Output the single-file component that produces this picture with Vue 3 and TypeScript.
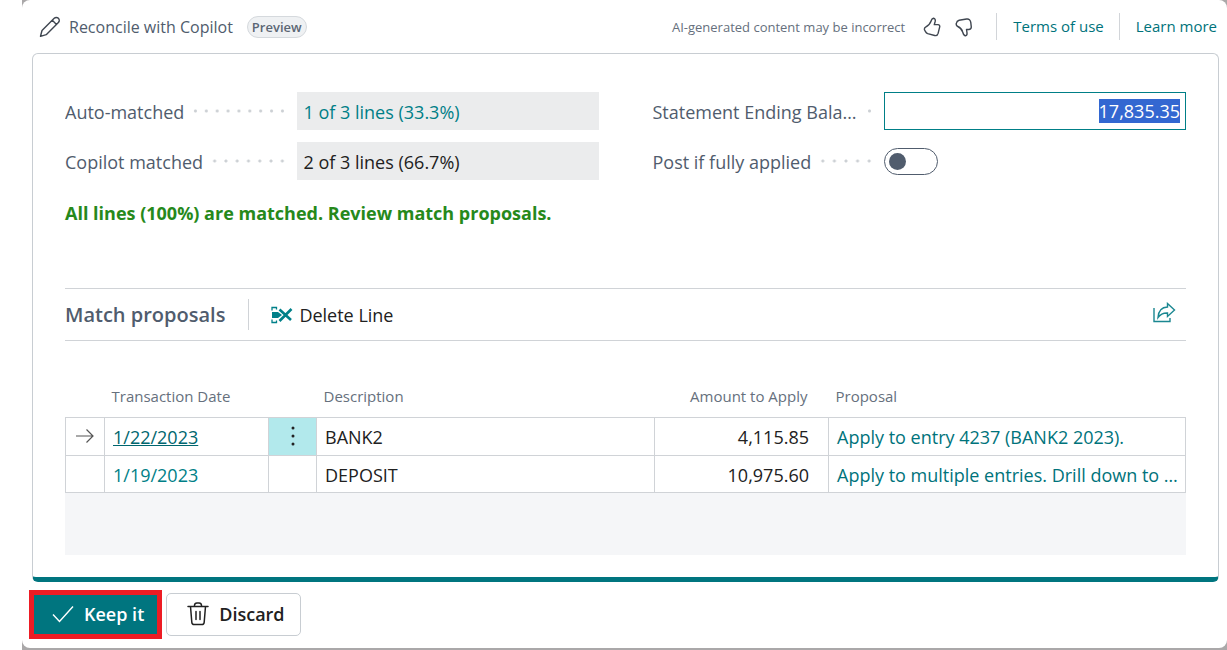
<script setup lang="ts">
import { onMounted, ref } from 'vue'

interface Proposal {
  date: string
  description: string
  amount: string
  proposal: string
}

const proposals: Proposal[] = [
  { date: '1/22/2023', description: 'BANK2', amount: '4,115.85', proposal: 'Apply to entry 4237 (BANK2 2023).' },
  { date: '1/19/2023', description: 'DEPOSIT', amount: '10,975.60', proposal: 'Apply to multiple entries. Drill down to see them.' },
]

const selected = ref(0)
const balance = ref('17,835.35')
const postIfApplied = ref(false)
const balanceInput = ref<HTMLInputElement | null>(null)

onMounted(() => {
  balanceInput.value?.focus()
  balanceInput.value?.select()
})
</script>

<template>
  <div class="backdrop">
    <main class="dialog">
      <header class="top">
        <svg class="pencil" width="22" height="22" viewBox="0 0 22 22" fill="none" stroke="#3f4650" stroke-width="1.4" stroke-linejoin="round" stroke-linecap="round">
          <path d="M1.5 20.3 3 14.5 15.2 2.3a2.9 2.9 0 0 1 4.2 4.2L7.2 18.7ZM13.3 4.2l4.2 4.2" />
        </svg>
        <h1>Reconcile with Copilot</h1>
        <span class="badge">Preview</span>
        <span class="notice">AI-generated content may be incorrect</span>
        <button class="icon-button" type="button" aria-label="Like">
          <svg width="18" height="20" viewBox="0 0 18 20" fill="none" stroke="#3f4650" stroke-width="1.4" stroke-linejoin="round">
            <path d="M10.5 1.2c1.5.3 2 1.6 1.7 3L11.3 7.6h3.7c1.3.1 2 1 1.7 2.300l-1.600 6.500c-.5 1.700-1.700 2.600-3.400 2.100l-7-1.900C3.500 16.200 3 15.600 2.500 14.700L1.600 13c-.4-1.300-.1-2.300 1-2.800 3-1.400 4.600-3.500 5.500-6.100.5-1.200.6-3 2.400-2.900Z" />
          </svg>
        </button>
        <button class="icon-button" type="button" aria-label="Dislike">
          <svg width="18" height="20" viewBox="0 0 18 20" fill="none" stroke="#3f4650" stroke-width="1.4" stroke-linejoin="round">
            <path d="M10.500 18.800c1.300-.2 1.700-1.500 1.500-2.900l-.5-3.400h2.300c1.700 0 2.500-.9 2.500-2.400l-.5-4.500c-.3-2.600-1.800-4-4.200-3.600L4.100 3.200C2.500 3.600 1.600 4.800 1.300 6.500c-.3 1.500.3 2.500 1.500 3C5.600 10.800 7 12.500 7.700 15c.5 1.600 1 4 2.800 3.800Z" />
          </svg>
        </button>
        <a class="top-link" href="#">Terms of use</a>
        <a class="top-link" href="#">Learn more</a>
      </header>

      <section class="card">
        <div class="fields">
          <div class="field">
            <span id="auto-label" class="caption">Auto-matched</span>
            <span class="dots"></span>
            <a class="value link" href="#" aria-describedby="auto-label">1 of 3 lines (33.3%)</a>
          </div>
          <div class="field">
            <label class="caption" for="balance">Statement Ending Balance</label>
            <span class="dots"></span>
            <input id="balance" ref="balanceInput" v-model="balance" class="amount-input" type="text" />
          </div>
          <div class="field">
            <span class="caption">Copilot matched</span>
            <span class="dots"></span>
            <span class="value">2 of 3 lines (66.7%)</span>
          </div>
          <div class="field">
            <label class="caption" for="post">Post if fully applied</label>
            <span class="dots"></span>
            <div class="control">
              <input id="post" v-model="postIfApplied" class="switch" type="checkbox" role="switch" />
            </div>
          </div>
        </div>
        <p class="status">All lines (100%) are matched. Review match proposals.</p>

        <div class="toolbar">
          <h2>Match proposals</h2>
          <button class="action" type="button">
            <svg width="22" height="18" viewBox="0 0 22 18" fill="none" stroke="#008089">
              <path d="M1 4.500V1.500h4.500v2M1 13.500v3h4.500v-2" stroke-width="1.300" />
              <path d="M1 6h6l4 3-4 3H1Z" fill="#008089" stroke="none" />
              <path d="m8.500 3.500 11.500 10.500M20.500 3 8.500 15" stroke-width="2.600" />
            </svg>
            Delete Line
          </button>
          <button class="icon-button share" type="button" aria-label="Share">
            <svg width="23" height="21" viewBox="0 0 23 21" fill="none" stroke="#1a8791" stroke-width="1.400" stroke-linejoin="miter">
              <path d="M1 6v13.500h16V16" />
              <path d="M5 15.500C5.500 8.500 9 5.200 14.500 5V1.500L21.500 8l-7 6.500V11C10 10.800 7.500 12 5 15.500Z" />
            </svg>
          </button>
        </div>

        <table>
          <colgroup>
            <col class="c-arrow" /><col class="c-date" /><col class="c-menu" /><col class="c-desc" /><col class="c-amount" /><col class="c-proposal" />
          </colgroup>
          <thead>
            <tr>
              <th></th>
              <th scope="col">Transaction Date</th>
              <th></th>
              <th scope="col">Description</th>
              <th scope="col" class="num">Amount to Apply</th>
              <th scope="col">Proposal</th>
            </tr>
          </thead>
          <tbody>
            <tr v-for="(row, i) in proposals" :key="row.date" :class="{ current: i === selected }" @click="selected = i">
              <td class="center">
                <svg v-if="i === selected" width="18" height="14" viewBox="0 0 18 14" fill="none" stroke="#555" stroke-width="1.200">
                  <path d="M0 7h17M10.500 .5 17 7l-6.500 6.500" />
                </svg>
              </td>
              <td><a class="date" href="#">{{ row.date }}</a></td>
              <td class="menu-cell">
                <button v-if="i === selected" type="button" aria-label="Show more options">
                  <svg width="4" height="20" viewBox="0 0 4 20" fill="#222"><circle cx="2" cy="2" r="1.500" /><circle cx="2" cy="10" r="1.500" /><circle cx="2" cy="18" r="1.500" /></svg>
                </button>
              </td>
              <td>{{ row.description }}</td>
              <td class="num">{{ row.amount }}</td>
              <td class="clip"><a href="#">{{ row.proposal }}</a></td>
            </tr>
          </tbody>
        </table>
        <div class="empty"></div>
      </section>

      <footer>
        <button class="keep" type="button">
          <svg width="22" height="18" viewBox="0 0 22 18" fill="none" stroke="#fff" stroke-width="1.400"><path d="m1 9.500 6.500 7L21 1.500" /></svg>
          Keep it
        </button>
        <button class="discard" type="button">
          <svg width="22" height="24" viewBox="0 0 22 24" fill="none" stroke="#212121" stroke-width="1.500" stroke-linecap="round">
            <path d="M1 4.500h20M7.500 4V3.200A2.400 2.400 0 0 1 9.900 1h2.200a2.400 2.400 0 0 1 2.400 2.200V4M3.500 4.500l1.300 15.700A2.500 2.500 0 0 0 7.300 22.600h7.400a2.500 2.500 0 0 0 2.500-2.400L18.500 4.500M9 9.500v8M13 9.500v8" />
          </svg>
          Discard
        </button>
      </footer>
    </main>
  </div>
</template>

<style>
body {
  margin: 0;
  background: #fff;
}
</style>

<style scoped>
* {
  box-sizing: border-box;
}
.backdrop {
  min-height: 100vh;
  margin-left: 22px;
  background: #aaa8a9;
  font-family: "Open Sans", "Noto Sans", sans-serif;
  font-size: 18px;
  line-height: 24px;
  color: #212121;
}
.dialog {
  background: #fff;
  border-radius: 8px;
  padding: 0 8px 9px 10px;
}
a {
  color: #00737b;
  text-decoration: none;
}
button {
  font: inherit;
  color: inherit;
  background: none;
  border: 0;
  padding: 0;
  cursor: pointer;
}
svg {
  display: block;
  flex: none;
}
.top {
  display: flex;
  align-items: center;
  height: 53px;
  padding-left: 7px;
}
h1 {
  margin: 0 14px 0 8px;
  font-size: 16px;
  font-weight: 400;
  color: #505c6d;
}
.badge {
  height: 22px;
  padding: 0 4px;
  border: 1px solid #d5d9dd;
  border-radius: 11px;
  background: #eff1f3;
  color: #5b6674;
  font-size: 13px;
  font-weight: 600;
  line-height: 20px;
}
.notice {
  margin-left: auto;
  margin-right: 18px;
  font-size: 13px;
  color: #66707d;
}
.icon-button {
  margin-right: 14px;
}
.top-link {
  border-left: 1px solid #d2d5d9;
  padding: 0 0 0 16px;
  margin-right: 2px;
  font-size: 15px;
  line-height: 27px;
}
.icon-button + .top-link {
  margin-left: 9px;
  margin-right: 15px;
}
.card {
  border: 1px solid #c8cdd2;
  border-bottom: 5px solid #00757f;
  border-radius: 6px;
  padding: 38px 32px 22px;
}
.fields {
  display: grid;
  grid-template-columns: repeat(2, minmax(0, 1fr));
  gap: 12px 54px;
}
.field {
  display: flex;
  align-items: center;
  height: 38px;
}
.caption {
  padding-top: 2px;
  overflow: hidden;
  white-space: nowrap;
  text-overflow: ellipsis;
  color: #505c6d;
}
.dots {
  flex: 1 0 11px;
  height: 4px;
  margin: 0 9px 0 6px;
  background: radial-gradient(circle, #ccd0d4 1px, transparent 2px) 0 0 / 11px 4px round;
}
.value,
.amount-input,
.control {
  flex: none;
  width: 302px;
  height: 38px;
}
.value {
  padding: 0 7px;
  background: #ebeced;
  line-height: 40px;
}
.link {
  color: #007f87;
}
.amount-input {
  border: 1px solid #007f87;
  border-radius: 0;
  outline: 0;
  padding: 0 5px;
  background: #fff;
  color: #212121;
  font: inherit;
  text-align: right;
}
.amount-input::selection {
  background: #3367d1;
  color: #fff;
}
.control {
  display: flex;
  align-items: center;
}
.switch {
  appearance: none;
  display: flex;
  align-items: center;
  width: 54px;
  height: 27px;
  margin: 0;
  padding: 0 4px;
  border: 1px solid #505c6d;
  border-radius: 14px;
}
.switch::before {
  content: "";
  width: 17px;
  height: 17px;
  border-radius: 50%;
  background: #505c6d;
}
.switch:checked {
  justify-content: flex-end;
}
.status {
  margin: 21px 0 63px;
  color: #26891b;
  font-weight: 700;
}
.toolbar {
  display: flex;
  align-items: center;
  height: 53px;
  border-top: 1px solid #d0d3d7;
  border-bottom: 1px solid #d0d3d7;
}
h2 {
  margin: 0;
  padding-right: 23px;
  border-right: 1px solid #d0d3d7;
  color: #505c6d;
  font-size: 20px;
  font-weight: 600;
  line-height: 31px;
}
.action {
  display: flex;
  align-items: center;
  gap: 6px;
  margin-left: 22px;
}
.share {
  margin: 0 10px 4px auto;
}
table {
  width: 100%;
  table-layout: fixed;
  border-collapse: collapse;
  margin-top: 38px;
}
.c-arrow { width: 39px; }
.c-date { width: 164px; }
.c-menu { width: 48px; }
.c-amount { width: 174px; }
.c-proposal { width: 357px; }
th {
  height: 38px;
  padding: 0 7px 4px;
  color: #66707d;
  font-size: 15px;
  font-weight: 400;
  text-align: left;
}
td {
  height: 38px;
  padding: 2px 8px 0;
  border: 1px solid #d0d3d7;
}
tr:last-child td {
  height: 37px;
}
th.num {
  padding-right: 21px;
}
.num {
  text-align: right;
}
td.num {
  padding-right: 19px;
}
td.center {
  padding: 0 10px;
}
.date {
  color: #007f87;
}
.current .date {
  text-decoration: underline;
  color: #00666e;
}
.menu-cell {
  padding: 0;
}
.current .menu-cell {
  background: #b2e9ec;
}
.menu-cell button {
  display: flex;
  align-items: center;
  justify-content: center;
  width: 100%;
  height: 36px;
}
.clip {
  overflow: hidden;
  white-space: nowrap;
  text-overflow: ellipsis;
  padding-right: 6px;
  color: #00737b;
}
.empty {
  height: 62px;
  background: #f5f6f8;
}
footer {
  display: flex;
  align-items: center;
  gap: 4px;
  margin: 8px 0 0 -3px;
}
.keep,
.discard {
  display: flex;
  align-items: center;
  font-weight: 600;
}
.keep {
  gap: 10px;
  height: 49px;
  padding: 0 13px 0 18px;
  border: 5px solid #ed1c24;
  background: #00757f;
  color: #fff;
}
.discard {
  gap: 10px;
  height: 43px;
  padding: 0 15px 0 20px;
  border: 1px solid #c8cdd2;
  border-radius: 5px;
}
</style>
